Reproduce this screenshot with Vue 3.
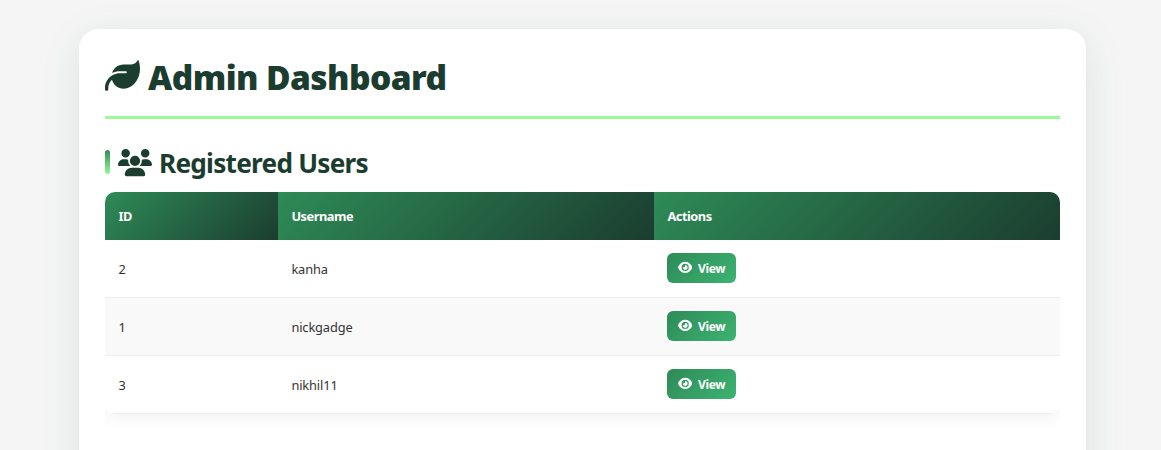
<script setup>
const users = [
  { id: 2, name: 'kanha' },
  { id: 1, name: 'nickgadge' },
  { id: 3, name: 'nikhil11' },
]
</script>

<template>
  <div class="page">
    <main class="container">
      <h1 class="title">
        <svg class="leaf" viewBox="0 0 512 512"><path d="M272 96c-78.600 0-145.100 51.500-167.700 122.500c33.600-17 71.500-26.500 111.700-26.500h88c8.800 0 16 7.200 16 16s-7.200 16-16 16H216c-16.600 0-32.700 1.900-48.200 5.400c-25.900 5.900-50 16.400-71.400 30.700C38.300 298.800 0 364.900 0 440v16c0 13.300 10.700 24 24 24s24-10.700 24-24V440c0-48.700 20.700-92.500 53.800-123.200C121.600 392.300 190.300 448 272 448l1 0c132.100-.7 239-130.900 239-291.400c0-42.600-7.500-83.100-21.100-119.600c-2.600-6.900-12.700-6.600-16.200-.1C455.900 72.100 418.700 96 376 96L272 96z" /></svg>
        <span>Admin Dashboard</span>
      </h1>
      <h2 class="subtitle">
        <i class="bar"></i>
        <svg class="users" viewBox="0 0 640 512"><path d="M144 0a80 80 0 1 1 0 160A80 80 0 1 1 144 0zM512 0a80 80 0 1 1 0 160A80 80 0 1 1 512 0zM0 298.700C0 239.800 47.800 192 106.700 192h42.700c15.900 0 31 3.500 44.600 9.700c-1.300 7.200-1.900 14.700-1.900 22.300c0 38.200 16.800 72.500 43.300 96c-.2 0-.4 0-.7 0H21.300C9.600 320 0 310.400 0 298.700zM405.300 320c-.2 0-.4 0-.7 0c26.600-23.500 43.300-57.800 43.300-96c0-7.600-.7-15-1.900-22.300c13.600-6.300 28.700-9.700 44.600-9.700h42.700C592.200 192 640 239.800 640 298.700c0 11.800-9.600 21.300-21.300 21.300H405.300zM224 224a96 96 0 1 1 192 0 96 96 0 1 1 -192 0zM128 485.300C128 411.700 187.700 352 261.300 352H378.700C452.300 352 512 411.700 512 485.300c0 14.700-11.900 26.700-26.700 26.700H154.700c-14.700 0-26.700-11.900-26.700-26.700z" /></svg>
        <span>Registered Users</span>
      </h2>
      <div class="table-wrap">
        <table>
          <colgroup><col class="c1" /><col class="c2" /><col /></colgroup>
          <thead>
            <tr>
              <th>ID</th>
              <th>Username</th>
              <th>Actions</th>
            </tr>
          </thead>
          <tbody>
            <tr v-for="u in users" :key="u.id">
              <td>{{ u.id }}</td>
              <td>{{ u.name }}</td>
              <td>
                <button class="view">
                  <svg class="eye" viewBox="0 0 576 512"><path d="M288 32c-80.800 0-145.500 36.800-192.600 80.600C48.600 156 17.300 208 2.500 243.700c-3.300 7.900-3.300 16.700 0 24.600C17.300 304 48.600 356 95.400 399.400C142.500 443.200 207.200 480 288 480s145.500-36.800 192.600-80.600c46.800-43.500 78.100-95.400 93-131.100c3.300-7.900 3.300-16.700 0-24.600c-14.900-35.700-46.200-87.700-93-131.100C433.500 68.800 368.800 32 288 32zM144 256a144 144 0 1 1 288 0 144 144 0 1 1 -288 0zm144-64c0 35.300-28.700 64-64 64c-7.100 0-13.900-1.200-20.300-3.300c-5.500-1.800-11.900 1.600-11.700 7.400c.3 6.900 1.300 13.800 3.200 20.700c13.700 51.200 66.400 81.600 117.600 67.900s81.600-66.400 67.900-117.600c-11.100-41.500-47.800-69.400-88.600-71.100c-5.800-.2-9.200 6.100-7.400 11.700c2.100 6.400 3.300 13.200 3.300 20.300z" /></svg>
                  <span>View</span>
                </button>
              </td>
            </tr>
          </tbody>
        </table>
      </div>
    </main>
  </div>
</template>

<style>
body {
  background: #f5f5f5;
}
</style>

<style scoped>
.page {
  box-sizing: border-box;
  height: 100vh;
  padding: 29px 75px 0 79px;
  overflow: hidden;
  background: #f5f5f5;
}
.container {
  box-sizing: border-box;
  height: 600px;
  padding: 26px 26px 0;
  border-radius: 20px;
  background: #fff;
  box-shadow: 0 10px 40px rgba(30, 105, 80, 0.12);
  font-family: "Noto Sans", "Open Sans", sans-serif;
  color: #333;
}
svg {
  display: block;
  flex: none;
  fill: currentColor;
}
.title {
  box-sizing: border-box;
  display: flex;
  height: 64px;
  margin: 0;
  padding-top: 2px;
  border-bottom: 3px solid #98fb98;
  color: #1b3d2f;
  font-size: 33.500px;
  font-weight: 900;
  line-height: 41px;
  letter-spacing: -0.570px;
  white-space: nowrap;
}
.leaf {
  width: 35px;
  height: 35px;
  margin: 0.500px 8px 0 0;
}
.subtitle {
  display: flex;
  align-items: center;
  height: 34px;
  margin: 27px 0 12px;
  color: #1b3d2f;
  font-size: 26.200px;
  font-weight: 700;
  line-height: 34px;
  letter-spacing: -0.750px;
  white-space: nowrap;
}
.bar {
  width: 5px;
  height: 24px;
  margin: -2px 8px 0 0;
  border-radius: 3px;
  background: linear-gradient(to bottom, #2e8b57, #98fb98);
}
.users {
  width: 34px;
  height: 27.200px;
  margin-right: 7px;
}
.table-wrap {
  overflow: hidden;
  padding-bottom: 30px;
}
table {
  width: 100%;
  table-layout: fixed;
  border-collapse: separate;
  border-spacing: 0;
  border-radius: 10px;
  overflow: hidden;
  box-shadow: 0 5px 15px rgba(0, 0, 0, 0.05);
  font-size: 12.800px;
  letter-spacing: -0.120px;
}
.c1 {
  width: 173px;
}
.c2 {
  width: 376px;
}
th,
td {
  box-sizing: border-box;
  padding: 0 13.400px;
  text-align: left;
  vertical-align: middle;
}
th {
  height: 48px;
  background: linear-gradient(135deg, #2e8b57, #1b3d2f);
  color: #fff;
  font-weight: 700;
  letter-spacing: -0.480px;
}
td {
  height: 58px;
  border-bottom: 1px solid #eee;
}
tbody tr:nth-child(even) {
  background: #f9f9f9;
}
.view {
  display: flex;
  align-items: center;
  width: 69px;
  height: 30px;
  margin: 0 0 2px -0.400px;
  padding: 0 0 0 10.500px;
  border: 0;
  border-radius: 6px;
  background: linear-gradient(135deg, #2e8b57, #3cb371);
  color: #fff;
  font: 700 12px "Noto Sans", "Open Sans", sans-serif;
  letter-spacing: -0.300px;
}
.view span {
  padding-top: 2px;
}
.eye {
  width: 14.400px;
  height: 12.800px;
  margin-right: 6px;
}
</style>
